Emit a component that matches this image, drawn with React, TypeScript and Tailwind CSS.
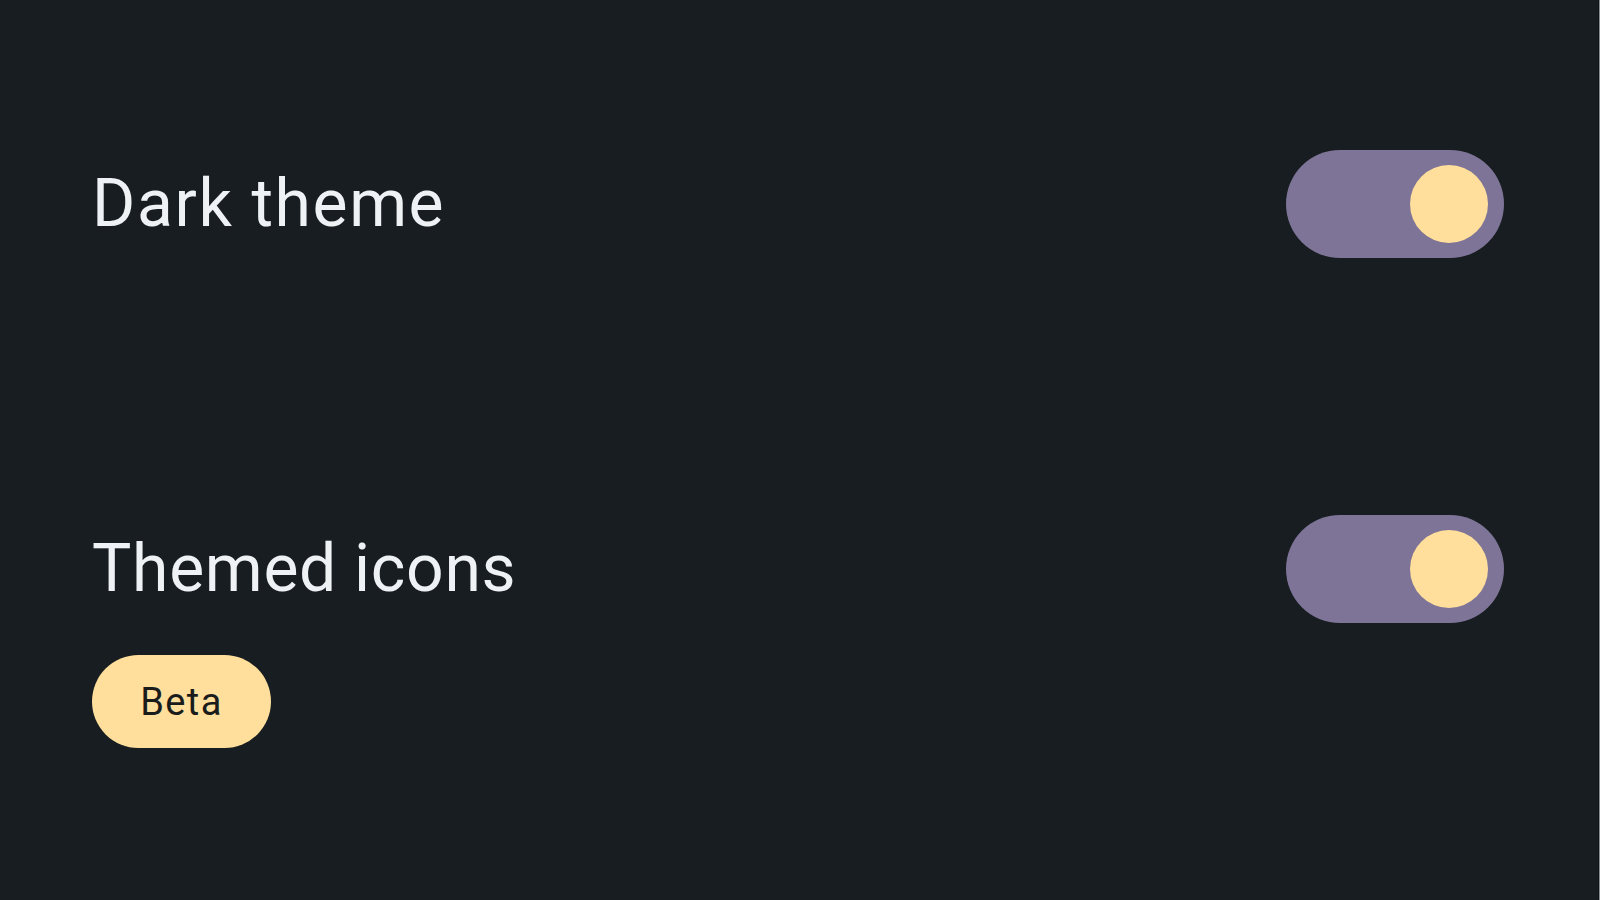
import React from "react";

function Toggle() {
  return (
    <div className="flex h-[108px] w-[218px] shrink-0 items-center justify-end rounded-full bg-[#7e7497] pr-[16px]">
      <div className="h-[78px] w-[78px] rounded-full bg-[#ffdf9b]" />
    </div>
  );
}

export default function App() {
  return (
    <div
      className="flex h-[900px] w-[1600px] bg-[#171d20]"
      style={{ fontFamily: "Roboto, 'Open Sans', sans-serif" }}
    >
      <div className="flex flex-1 flex-col pl-[92px] pr-[94px] pt-[150px]">
        <div className="flex h-[108px] items-center justify-between">
          <span className="text-[66px] leading-none tracking-[1.6px] text-[#eef2f5]">Dark theme</span>
          <Toggle />
        </div>
        <div className="mt-[257px] flex h-[108px] items-center justify-between">
          <span className="text-[66px] leading-none tracking-[0.7px] text-[#eef2f5]">Themed icons</span>
          <Toggle />
        </div>
        <div className="mt-[32px] flex h-[93px] w-[179px] items-center justify-center rounded-full bg-[#ffdf9b]">
          <span className="text-[38px] leading-none tracking-[1.4px] text-[#1a1c1c]">Beta</span>
        </div>
      </div>
      <div className="w-px bg-[#0f1416]" />
      <div className="w-px bg-[#8a8e90]" />
    </div>
  );
}
